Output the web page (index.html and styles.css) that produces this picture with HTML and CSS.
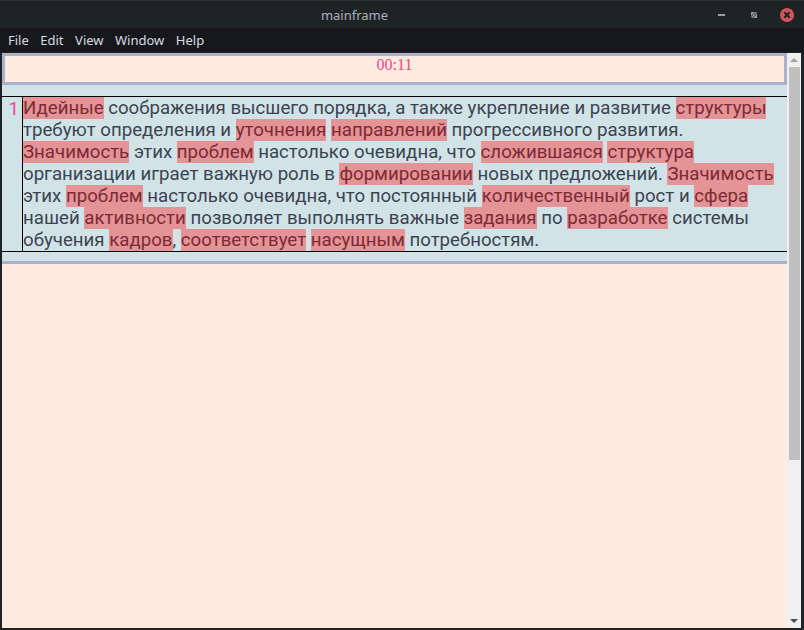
FILE: index.html
```html
<!DOCTYPE html>
<html>
<head>
<meta charset="utf-8">
<link rel="stylesheet" href="styles.css">
</head>
<body>
<div class="window">
  <div class="titlebar">
    <div class="title">mainframe</div>
    <div class="controls">
      <svg class="ctl" width="14" height="14" viewBox="0 0 14 14"><rect x="3" y="6" width="7" height="2" fill="#9aa0a6"/></svg>
      <svg class="ctl" width="14" height="14" viewBox="0 0 14 14"><path d="M4 4h4l-4 4z M10 10h-4l4-4z" fill="#9aa0a6"/><path d="M4.5 9.5l5-5" stroke="#9aa0a6" stroke-width="1.4"/></svg>
      <svg class="ctl" width="16" height="16" viewBox="0 0 16 16"><circle cx="8" cy="8" r="7" fill="#d7545b"/><path d="M5.3 5.3l5.4 5.4M10.7 5.3l-5.4 5.4" stroke="#1e2326" stroke-width="2"/></svg>
    </div>
  </div>
  <div class="menubar">
    <span class="menu">File</span>
    <span class="menu">Edit</span>
    <span class="menu">View</span>
    <span class="menu">Window</span>
    <span class="menu">Help</span>
  </div>
  <div class="client">
    <div class="content">
      <div class="timer">00:11</div>
      <div class="editor">
        <div class="row">
          <div class="gutter">1</div>
          <div class="text">
            <div class="line"><span class="hl">Идейные</span> соображения высшего порядка, а также укрепление и развитие <span class="hl">структуры</span></div>
            <div class="line">требуют определения и <span class="hl">уточнения</span> <span class="hl">направлений</span> прогрессивного развития.</div>
            <div class="line"><span class="hl">Значимость</span> этих <span class="hl">проблем</span> настолько очевидна, что <span class="hl">сложившаяся</span> <span class="hl">структура</span></div>
            <div class="line">организации играет важную роль в <span class="hl">формировании</span> новых предложений. <span class="hl">Значимость</span></div>
            <div class="line">этих <span class="hl">проблем</span> настолько очевидна, что постоянный <span class="hl">количественный</span> рост и <span class="hl">сфера</span></div>
            <div class="line">нашей <span class="hl">активности</span> позволяет выполнять важные <span class="hl">задания</span> по <span class="hl">разработке</span> системы</div>
            <div class="line">обучения <span class="hl">кадров</span>, <span class="hl">соответствует</span> <span class="hl">насущным</span> потребностям.</div>
          </div>
        </div>
      </div>
      <div class="rest"></div>
    </div>
    <div class="scrollbar">
      <div class="arrow up"></div>
      <div class="thumb"></div>
      <div class="arrow down"></div>
    </div>
  </div>
</div>
</body>
</html>
```
FILE: styles.css
```css
* { box-sizing: border-box; }
html, body { margin: 0; padding: 0; }
body {
  background: #1e2326;
  width: 804px;
  height: 630px;
  overflow: hidden;
  font-family: "Noto Sans", sans-serif;
}
.window {
  display: flex;
  flex-direction: column;
  height: 630px;
}
.titlebar {
  height: 28px;
  flex: none;
  background: #1e2326;
  border-top: 1px solid #2c3134;
  display: flex;
  align-items: center;
}
.title {
  flex: 1;
  text-align: center;
  padding-right: 6px;
  color: #aab0b8;
  font-size: 13px;
}
.controls {
  display: flex;
  align-items: center;
  gap: 18px;
  padding-right: 9px;
}
.menubar {
  height: 24px;
  flex: none;
  background: #16181c;
  display: flex;
  align-items: center;
  padding-left: 8px;
  gap: 11.5px;
  color: #d8dce0;
  font-size: 13px;
}
.client {
  flex: 1;
  display: flex;
  padding: 1px 3px 2px 2px;
  min-height: 0;
}
.content {
  flex: 1;
  display: flex;
  flex-direction: column;
  background: #feebe0;
}
.timer {
  height: 32px;
  flex: none;
  border: 3px solid #acb0c8;
  background: #feebe0;
  text-align: center;
  font-family: "Liberation Serif", serif;
  font-size: 16px;
  color: #f0478b;
  line-height: 18px;
  padding-top: 0;
}
.editor {
  background: #d2e3e8;
  padding-top: 11px;
  padding-bottom: 9px;
  border-bottom: 3px solid #acb0c8;
}
.row {
  display: flex;
  border-top: 1px solid #000;
  border-bottom: 1px solid #000;
}
.gutter {
  width: 21px;
  flex: none;
  border-right: 1px solid #000;
  text-align: right;
  padding-right: 3px;
  color: #f0478b;
  font-family: Roboto, sans-serif;
  font-size: 18.67px;
  line-height: 22px;
  padding-top: 1px;
}
.text {
  flex: 1;
  font-family: Roboto, sans-serif;
  font-size: 18.67px;
  line-height: 22px;
  color: #3c4350;
}
.line { white-space: nowrap; }
.hl {
  background: #e49396;
  color: #7d2a35;
}
.rest { flex: 1; }
.scrollbar {
  width: 14px;
  flex: none;
  background: #f0f0f0;
  display: flex;
  flex-direction: column;
  align-items: center;
}
.arrow {
  width: 0;
  height: 0;
  border-left: 4px solid transparent;
  border-right: 4px solid transparent;
  margin: 5px 0;
}
.arrow.up { border-bottom: 4px solid #a0a0a0; }
.arrow.down { border-top: 4px solid #505050; margin-top: auto; margin-bottom: 5px; }
.thumb {
  width: 11px;
  height: 393px;
  background: #c0c0c0;
}
```
